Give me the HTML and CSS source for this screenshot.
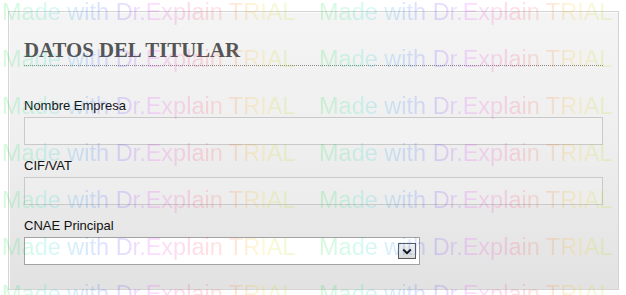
FILE: index.html
```html
<!DOCTYPE html>
<html lang="es">
<head>
<meta charset="utf-8">
<title>Datos del titular</title>
<link rel="stylesheet" href="styles.css">
</head>
<body>
<section class="panel">
  <h2 class="panel-title">DATOS DEL TITULAR</h2>
  <div class="fields">
    <div class="field">
      <label class="field-label">Nombre Empresa</label>
      <div class="text-input"></div>
    </div>
    <div class="field">
      <label class="field-label">CIF/VAT</label>
      <div class="text-input"></div>
    </div>
    <div class="field">
      <label class="field-label">CNAE Principal</label>
      <div class="select-input">
        <span class="select-button">
          <svg width="10" height="7" viewBox="0 0 10 7"><path d="M1.2 1.5 L5 5.2 L8.8 1.5" fill="none" stroke="#111" stroke-width="1.9"/></svg>
        </span>
      </div>
    </div>
  </div>
</section>
<div class="watermark" aria-hidden="true">
  <div class="wm-row"><span class="wm-cell"><span class="wm-text">Made with Dr.Explain TRIAL</span></span><span class="wm-cell"><span class="wm-text">Made with Dr.Explain TRIAL</span></span></div>
  <div class="wm-row"><span class="wm-cell"><span class="wm-text">Made with Dr.Explain TRIAL</span></span><span class="wm-cell"><span class="wm-text">Made with Dr.Explain TRIAL</span></span></div>
  <div class="wm-row"><span class="wm-cell"><span class="wm-text">Made with Dr.Explain TRIAL</span></span><span class="wm-cell"><span class="wm-text">Made with Dr.Explain TRIAL</span></span></div>
  <div class="wm-row"><span class="wm-cell"><span class="wm-text">Made with Dr.Explain TRIAL</span></span><span class="wm-cell"><span class="wm-text">Made with Dr.Explain TRIAL</span></span></div>
  <div class="wm-row"><span class="wm-cell"><span class="wm-text">Made with Dr.Explain TRIAL</span></span><span class="wm-cell"><span class="wm-text">Made with Dr.Explain TRIAL</span></span></div>
  <div class="wm-row"><span class="wm-cell"><span class="wm-text">Made with Dr.Explain TRIAL</span></span><span class="wm-cell"><span class="wm-text">Made with Dr.Explain TRIAL</span></span></div>
  <div class="wm-row"><span class="wm-cell"><span class="wm-text">Made with Dr.Explain TRIAL</span></span><span class="wm-cell"><span class="wm-text">Made with Dr.Explain TRIAL</span></span></div>
</div>
</body>
</html>
```
FILE: styles.css
```css
html, body {
  margin: 0;
  padding: 0;
  background: #ffffff;
  width: 626px;
  height: 295px;
  overflow: hidden;
  font-family: "Liberation Sans", Arial, sans-serif;
}

.panel {
  box-sizing: border-box;
  margin: 11px 0 0 8px;
  width: 611px;
  height: 279px;
  padding: 26px 15px 0 15px;
  border: 1px solid #d4d4d4;
  background: linear-gradient(180deg, #f4f4f4 0%, #efefef 45%, #e2e2e2 100%);
  box-shadow: inset 1px 1px 0 #fbfbfb;
}

.panel-title {
  margin: 0;
  padding: 0 0 3px 0;
  font-family: "Liberation Serif", "Times New Roman", serif;
  font-weight: bold;
  font-size: 20.8px;
  line-height: 24px;
  color: #555555;
  border-bottom: 1px dotted #8a8a8a;
}

.fields {
  display: flex;
  flex-direction: column;
  gap: 13px;
  margin-top: 32px;
}

.field {
  display: flex;
  flex-direction: column;
  gap: 3px;
}

.field-label {
  font-size: 13px;
  line-height: 16px;
  color: #111111;
}

.text-input {
  box-sizing: border-box;
  height: 28px;
  border: 1px solid #c9c9c9;
  background: rgba(255, 255, 255, 0.18);
}

.select-input {
  box-sizing: border-box;
  width: 396px;
  height: 28px;
  border: 1px solid #a2a2a2;
  background: #ffffff;
  display: flex;
  justify-content: flex-end;
  align-items: flex-start;
  padding: 5px 3px 0 0;
}

.select-button {
  box-sizing: border-box;
  width: 18px;
  height: 16px;
  border: 1px solid #5a5a5a;
  background: linear-gradient(180deg, #f2f2f2, #d9d9d9);
  display: flex;
  align-items: center;
  justify-content: center;
}

.watermark {
  position: absolute;
  left: 0;
  top: -11px;
  width: 626px;
  height: 320px;
  overflow: hidden;
  pointer-events: none;
  opacity: 0.16;
}

.wm-row {
  height: 47px;
  line-height: 47px;
  white-space: nowrap;
  padding-left: 2px;
}

.wm-cell {
  display: inline-block;
  width: 317px;
}

.wm-text {
  font-family: "Liberation Sans", Arial, sans-serif;
  font-size: 23.5px;
  background: linear-gradient(90deg,
    hsl(130, 95%, 45%) 0%,
    hsl(170, 95%, 45%) 15%,
    hsl(210, 95%, 50%) 27%,
    hsl(250, 95%, 58%) 40%,
    hsl(295, 95%, 58%) 52%,
    hsl(340, 95%, 58%) 66%,
    hsl(20, 95%, 55%) 78%,
    hsl(50, 95%, 50%) 88%,
    hsl(80, 95%, 45%) 100%);
  -webkit-background-clip: text;
  background-clip: text;
  color: transparent;
}
```
